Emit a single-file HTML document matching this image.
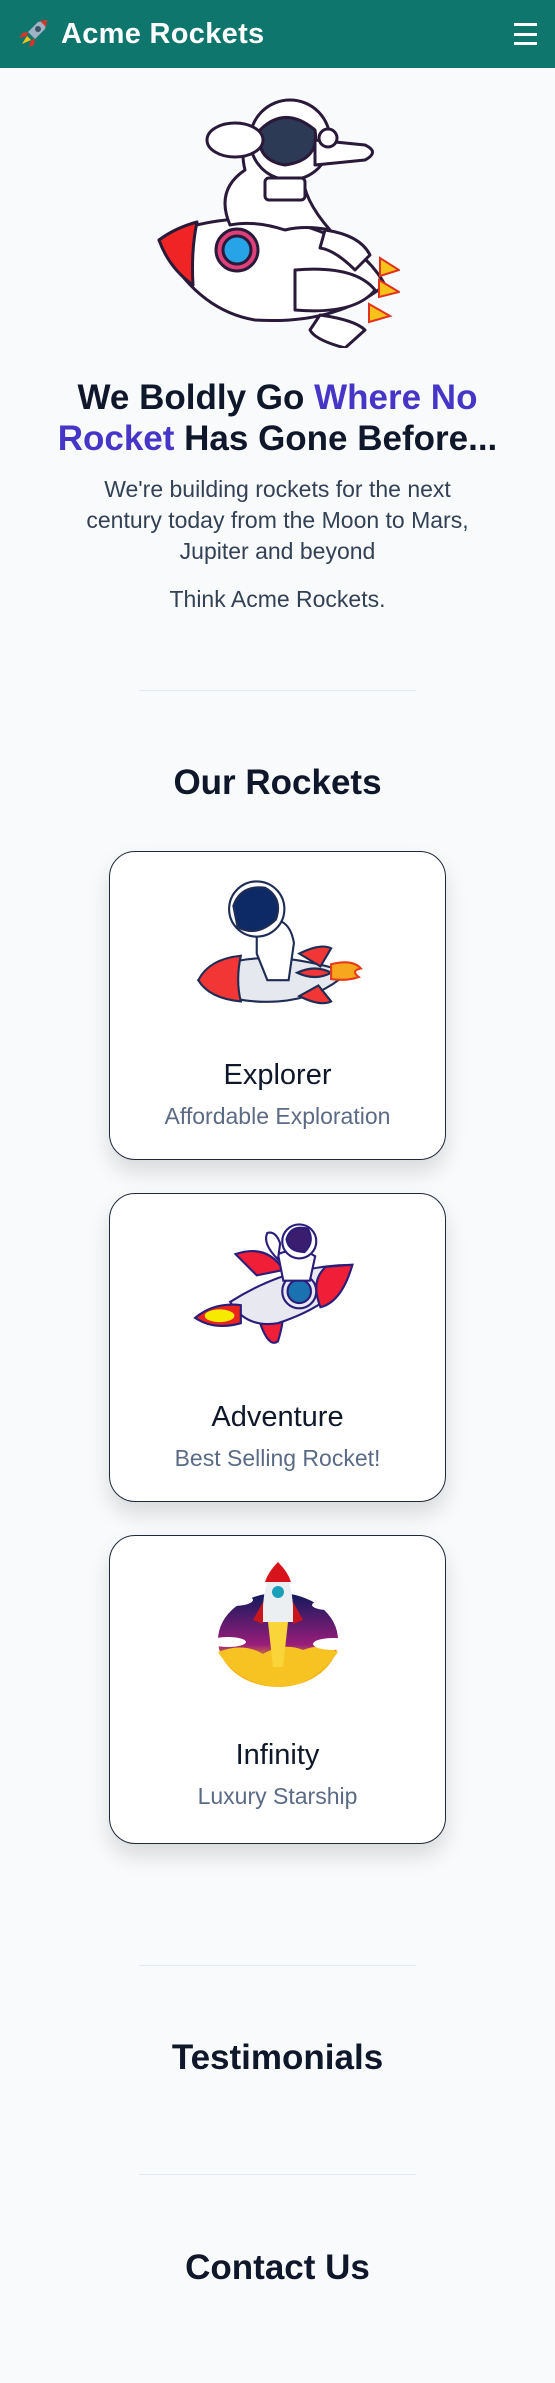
<!DOCTYPE html>
<html><head><meta charset="utf-8"><style>
*{margin:0;padding:0;box-sizing:border-box}
body{width:555px;height:2383px;background:#f8fafc;font-family:"Liberation Sans","DejaVu Sans",sans-serif;color:#0f172a;position:relative;overflow:hidden}
.abs{position:absolute}
.c{position:absolute;left:0;width:555px;text-align:center}
header{position:absolute;left:0;top:0;width:555px;height:68px;background:#0f766d}
.ham{position:absolute;left:514px;width:23px;height:3px;background:#fff}
.hr{position:absolute;left:139px;width:277px;height:1px;background:#e2e8f0}
.card{position:absolute;left:109px;width:337px;height:309px;background:#fff;border:1.5px solid #1e293b;border-radius:26px;box-shadow:0 12px 22px rgba(0,0,0,.13)}
.card .t{position:absolute;left:0;width:100%;text-align:center;font-size:29px;color:#0f172a}
.card .s{position:absolute;left:0;width:100%;text-align:center;font-size:23px;color:#5b6b85}
h2{font-size:35px;font-weight:bold}
</style></head><body>
<header>
<svg class="abs" style="left:18px;top:17px" width="32" height="32" viewBox="0 0 32 32">
<path d="M29 3 L20 5 L10 15 L17 22 L27 12Z" fill="#9fb3c4"/><path d="M29 3 L22 4 L28 10Z" fill="#d8352a"/>
<circle cx="20" cy="12" r="3" fill="#3b5566"/><path d="M10 15 L4 16 L2 21 L9 19Z" fill="#d8352a"/><path d="M17 22 L16 28 L11 30 L13 23Z" fill="#d8352a"/>
<path d="M9 19 L4 27 L13 23Z" fill="#f5c518"/></svg>
<div class="abs" style="left:61px;top:18px;font-size:29px;font-weight:bold;color:#fff;letter-spacing:.3px">Acme Rockets</div>
<div class="ham" style="top:23px"></div><div class="ham" style="top:33px"></div><div class="ham" style="top:42px"></div>
</header>

<svg class="abs" style="left:155px;top:90px" width="245" height="258" viewBox="0 0 245 258">
<g stroke="#2a1a3a" stroke-width="3" stroke-linejoin="round">
<path d="M4 150 Q40 128 110 128 Q200 140 230 195 Q180 235 100 230 Q40 220 4 150Z" fill="#fff"/>
<path d="M4 150 Q20 138 42 132 Q36 160 38 195 Q14 178 4 150Z" fill="#f02424"/>
<path d="M140 180 Q200 175 220 200 Q200 225 140 220Z" fill="#fff"/>
<path d="M170 140 Q205 145 215 165 L200 180 Q180 160 165 158Z" fill="#fff"/>
<path d="M165 225 Q200 230 210 240 L190 258 Q160 250 155 240Z" fill="#fff"/>
<circle cx="82" cy="160" r="21" fill="#e0407a"/><circle cx="82" cy="160" r="14" fill="#27a3e8"/>
<path d="M175 140 Q140 100 150 70 Q160 40 120 35 Q80 40 90 80 Q60 100 75 135 Q100 130 130 140 Q150 135 175 140Z" fill="#fff"/>
<circle cx="135" cy="50" r="40" fill="#fff"/>
<path d="M105 40 Q130 15 160 40 Q165 70 130 75 Q100 70 105 40Z" fill="#2d3a55"/>
<ellipse cx="80" cy="50" rx="28" ry="17" fill="#fff"/>
<path d="M160 50 L210 55 Q225 62 210 70 L160 75Z" fill="#fff"/>
<circle cx="173" cy="48" r="9" fill="#fff"/>
<rect x="110" y="88" width="40" height="22" rx="4" fill="#fff"/>
</g>
<g fill="#f7c21a" stroke="#e0321e" stroke-width="2"><path d="M225 168 L244 180 L225 186Z"/><path d="M224 190 L244 202 L224 207Z"/><path d="M214 214 L235 226 L214 232Z"/></g>
</svg>

<div class="c" style="top:377px;font-size:35px;font-weight:bold;line-height:41px">We Boldly Go <span style="color:#4536c8">Where No</span><br><span style="color:#4536c8">Rocket</span> Has Gone Before...</div>
<div class="c" style="top:474px;font-size:23px;line-height:31px;color:#334155">We're building rockets for the next<br>century today from the Moon to Mars,<br>Jupiter and beyond</div>
<div class="c" style="top:586px;font-size:23px;color:#334155">Think Acme Rockets.</div>
<div class="hr" style="top:690px"></div>
<h2 class="c" style="top:763px">Our Rockets</h2>

<div class="card" style="top:851px">
<svg class="abs" style="left:83px;top:26px" width="170" height="130" viewBox="0 0 160 120">
<g stroke="#1f2d55" stroke-width="2">
<path d="M5 95 Q30 70 90 75 Q125 80 145 88 Q120 112 80 115 Q30 118 5 95Z" fill="#e5e8ee"/>
<path d="M5 95 Q15 75 45 72 Q40 95 45 115 Q15 112 5 95Z" fill="#f23535"/>
<path d="M100 70 Q120 60 130 65 L120 82Z M100 110 Q120 120 130 115 L118 100Z" fill="#f23535"/>
<path d="M98 88 Q115 80 130 88 Q115 96 98 88Z" fill="#f23535"/>
<path d="M60 40 Q90 30 95 60 L90 95 L70 95 L60 70Z" fill="#fff"/>
<circle cx="60" cy="28" r="26" fill="#fff"/><path d="M38 25 Q45 5 68 8 Q85 18 78 38 Q60 55 42 45Z" fill="#0e2a66"/>
</g>
<g fill="#f6a71d" stroke="#e63a1b" stroke-width="2"><path d="M130 80 Q150 75 158 84 Q148 86 156 92 Q145 96 130 94Z"/></g>
</svg>
<div class="t" style="top:207px">Explorer</div>
<div class="s" style="top:251px">Affordable Exploration</div>
</div>

<div class="card" style="top:1193px">
<svg class="abs" style="left:83px;top:28px" width="170" height="128" viewBox="0 0 160 120">
<g stroke="#2a1e7a" stroke-width="2">
<path d="M40 30 Q70 20 85 45 L60 50Z" fill="#f01e36"/><path d="M60 85 Q70 120 80 112 Q85 95 85 85Z" fill="#f01e36"/>
<path d="M35 75 Q90 40 150 40 Q140 75 80 95 Q50 100 35 75Z" fill="#e8e8f0"/>
<path d="M150 40 Q140 75 120 80 Q110 55 125 42Z" fill="#f01e36"/>
<circle cx="100" cy="65" r="16" fill="#e8e8f0"/><circle cx="100" cy="65" r="11" fill="#1a73b0"/>
<path d="M2 90 Q20 75 45 78 L45 95 Q20 102 2 90Z" fill="#e8241f"/>
<ellipse cx="25" cy="88" rx="14" ry="6" fill="#f6ea00" stroke="none"/>
<path d="M80 30 Q100 22 115 32 L110 55 L85 55Z" fill="#fff"/>
<circle cx="100" cy="18" r="16" fill="#fff"/><path d="M88 16 Q92 2 108 6 Q115 18 105 28 Q90 28 88 16Z" fill="#3a1d6e"/>
<path d="M80 35 Q65 20 70 10 Q78 8 82 20Z" fill="#fff"/>
</g></svg>
<div class="t" style="top:207px">Adventure</div>
<div class="s" style="top:251px">Best Selling Rocket!</div>
</div>

<div class="card" style="top:1535px">
<svg class="abs" style="left:93px;top:26px" width="150" height="125" viewBox="0 0 150 125">
<defs><linearGradient id="g" x1="0" y1="0" x2="0" y2="1"><stop offset="0" stop-color="#0f1a5c"/><stop offset=".55" stop-color="#9a1d7a"/><stop offset=".75" stop-color="#f5b21a"/></linearGradient></defs>
<ellipse cx="75" cy="78" rx="60" ry="47" fill="url(#g)"/>
<path d="M15 90 Q40 80 60 92 Q80 80 100 88 Q120 80 135 90 Q110 125 75 125 Q35 122 15 90Z" fill="#f6c323"/>
<path d="M65 60 L85 60 L80 105 L70 105Z" fill="#f9d53a"/>
<path d="M75 0 Q92 20 90 60 L60 60 Q58 20 75 0Z" fill="#eceff2"/>
<path d="M75 0 Q85 10 88 20 L62 20 Q65 10 75 0Z" fill="#d7141c"/>
<circle cx="75" cy="30" r="6" fill="#1aa0b8"/>
<path d="M60 40 L50 58 L60 62Z M90 40 L100 58 L90 62Z" fill="#c8161c"/>
<g fill="#fff"><ellipse cx="30" cy="38" rx="20" ry="6"/><ellipse cx="125" cy="43" rx="16" ry="5"/><ellipse cx="25" cy="80" rx="18" ry="5"/><ellipse cx="130" cy="82" rx="20" ry="6"/></g>
</svg>
<div class="t" style="top:203px">Infinity</div>
<div class="s" style="top:247px">Luxury Starship</div>
</div>

<div class="hr" style="top:1965px"></div>
<h2 class="c" style="top:2038px">Testimonials</h2>
<div class="hr" style="top:2174px"></div>
<h2 class="c" style="top:2248px">Contact Us</h2>
</body></html>
